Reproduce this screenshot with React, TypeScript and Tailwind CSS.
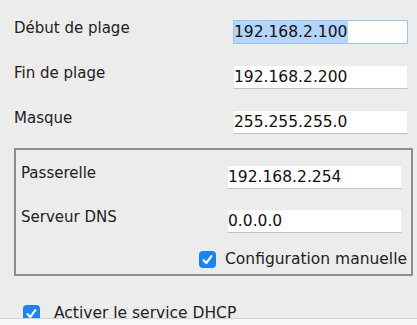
import React from "react";

function Check() {
  return (
    <div className="w-[17px] h-[17px] shrink-0 rounded-[4px] bg-[#1b82fb] flex items-center justify-center">
      <svg width="17" height="17" viewBox="0 0 17 17">
        <path d="M4.6 9.2 L7.3 12 L12.4 5.2" fill="none" stroke="#ffffff" strokeWidth="2.2" strokeLinecap="round" strokeLinejoin="round" />
      </svg>
    </div>
  );
}

function Field({ value, selected }: { value: string; selected?: boolean }) {
  return (
    <div
      className={
        "w-[175px] h-[24px] bg-white border " +
        (selected ? "border-[#9cc4ee]" : "border-[#ebebeb] border-b-[#c2c2c2]")
      }
    >
      <span
        className={
          "block h-[22px] leading-[22px] text-[15.5px] text-[#111] w-fit pr-[1px] " +
          (selected ? "bg-[#b3d4fc]" : "")
        }
      >
        {value}
      </span>
    </div>
  );
}

function Row({ label, value, labelW, selected }: { label: string; value: string; labelW: string; selected?: boolean }) {
  return (
    <div className="flex items-start h-[24px]">
      <div className={labelW + " text-[15px] leading-[16px] text-[#222]"}>{label}</div>
      <Field value={value} selected={selected} />
    </div>
  );
}

export default function App() {
  return (
    <div className="w-[417px] h-[325px] bg-[#ececec] flex flex-col overflow-hidden font-['DejaVu_Sans',sans-serif]">
      <div className="flex-1 overflow-hidden">
        <div className="pt-[20px] pl-[14px] flex flex-col gap-[21px]">
          <Row label="Début de plage" value="192.168.2.100" labelW="w-[219px]" selected />
          <Row label="Fin de plage" value="192.168.2.200" labelW="w-[219px]" />
          <Row label="Masque" value="255.255.255.0" labelW="w-[219px]" />
        </div>
        <div className="ml-[14px] mt-[14px] w-[399px] border-2 border-[#8e8e8e] pt-[15px] pl-[5px] pr-[4px] pb-[6px]">
          <div className="flex flex-col gap-[20px]">
            <Row label="Passerelle" value="192.168.2.254" labelW="w-[206px]" />
            <Row label="Serveur DNS" value="0.0.0.0" labelW="w-[206px]" />
          </div>
          <div className="mt-[18px] flex items-center justify-end gap-[9px]">
            <Check />
            <span className="text-[15.5px] leading-[17px] text-[#222]">Configuration manuelle</span>
          </div>
        </div>
        <div className="mt-[29px] ml-[23px] flex items-center gap-[14px]">
          <Check />
          <span className="text-[15.5px] leading-[17px] text-[#222]">Activer le service DHCP</span>
        </div>
      </div>
      <div className="h-[7px] shrink-0 border-t border-[#d2d2d2] bg-[#f6f6f6]" />
    </div>
  );
}
